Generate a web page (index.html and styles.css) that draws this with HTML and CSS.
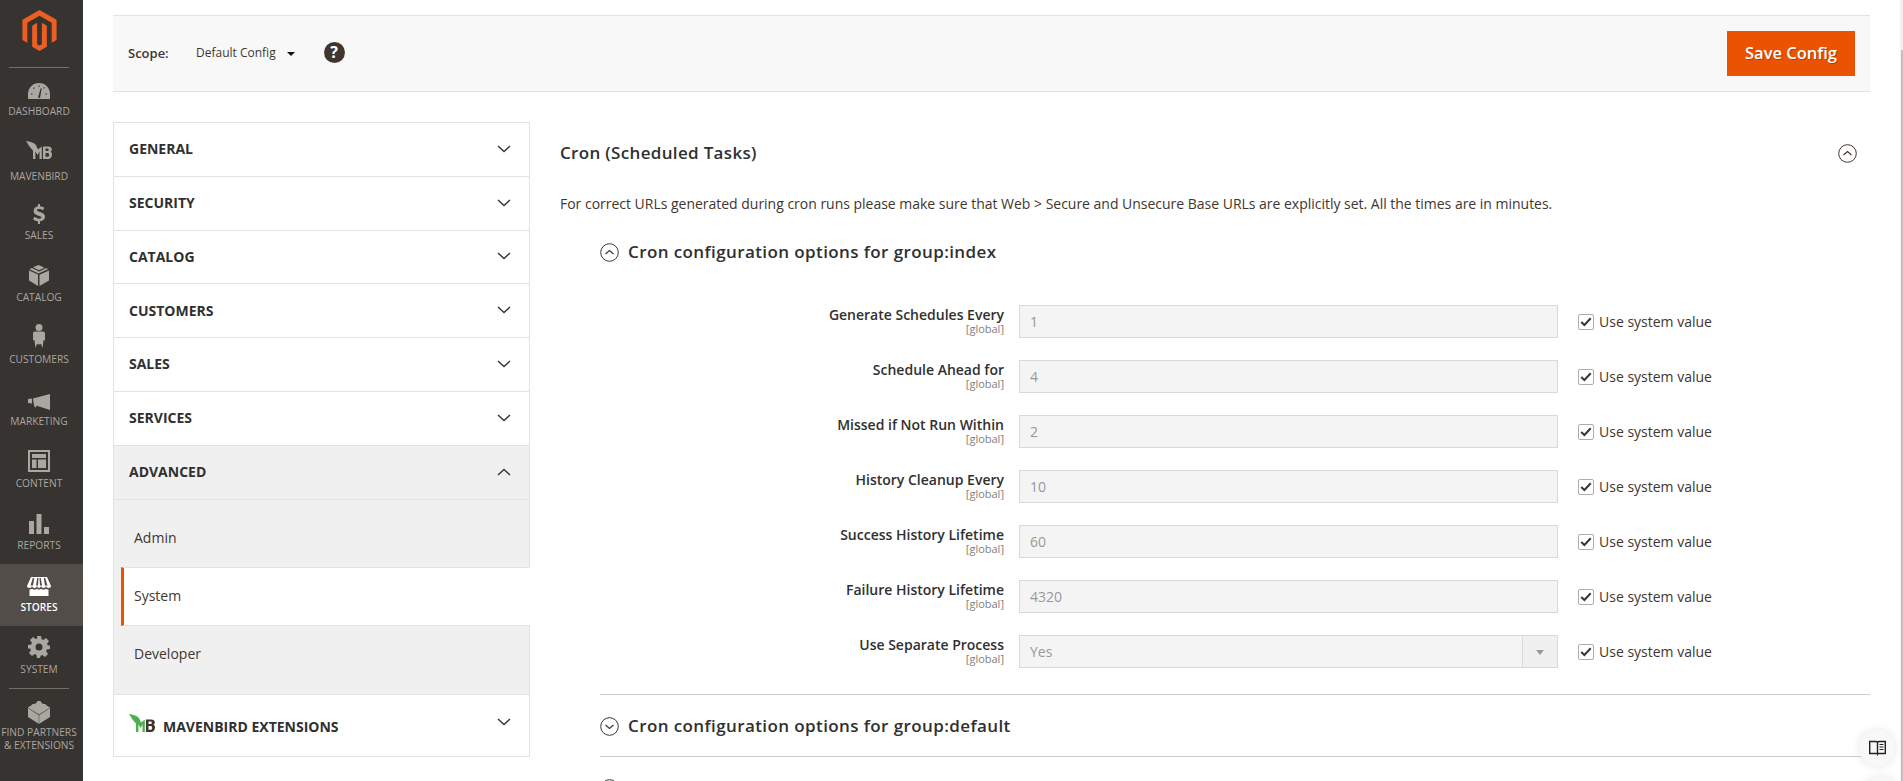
FILE: index.html
```html
<!DOCTYPE html>
<html lang="en">
<head>
<meta charset="utf-8">
<title>Configuration</title>
<link rel="stylesheet" href="styles.css">
</head>
<body>
<div class="app">
  <nav class="side">
    <div class="logo-box">
      <svg class="logo" viewBox="0 0 40 48" width="35" height="41"><path fill="#eb5f22" d="M20 0L40 11.5V35L34.3 38.3V15L20 6.8 5.7 15V38.3L0 35V11.5Z"/><path fill="#eb5f22" d="M11.4 18.3L17.2 15V40L20 41.7 22.8 40V15L28.6 18.3V43L20 48 11.4 43Z"/></svg>
    </div>
    <a class="nav-item nav-dash"><svg class="ic" width="22" height="16" viewBox="0 0 22 16"><path fill="#aaa6a0" d="M11 0C4.900 0 0 4.900 0 11v5h22v-5C22 4.900 17.100 0 11 0z"/><path fill="#373330" d="M10 14.500l2.700-9.300 1 .3-1.700 9.500zM3 10.500h1.500v1H3zM17.500 10.500H19v1h-1.500zM5 5.300l1.100-1 .8.800-1.100 1zM10.500 2.500h1v1.500h-1zM15.200 5l1-1 .8.800-1 1z"/></svg><span>Dashboard</span></a>
    <a class="nav-item nav-mb"><svg class="ic" width="26" height="19" viewBox="0 0 26 19"><path fill="#aaa6a0" d="M0 0C4 .3 7.500 1.500 10 4L12 8.500 15.800 5.500V18H13.500V10.500L11.600 14 9.400 10.500V18H7V9.500C4.500 7 2 3.500 0 0Z"/><path fill="#aaa6a0" fill-rule="evenodd" d="M17 5.500h5c2.500 0 3.800 1 3.800 3 0 1-.5 1.800-1.300 2.300 1 .5 1.500 1.300 1.500 2.500 0 2.900-1.700 4.700-4 4.700h-5zM19.500 7.500v2.500h2c.8 0 1.200-.4 1.200-1.200s-.4-1.300-1.200-1.300zM19.500 12v3.700h2.200c.9 0 1.400-.7 1.400-1.800 0-1.200-.5-1.900-1.400-1.900z"/></svg><span>Mavenbird</span></a>
    <a class="nav-item"><svg class="ic" width="12" height="20" viewBox="0 0 12 20"><path fill="#aaa6a0" d="M5 0h2v2.200c1.800.2 3.300.8 4.400 1.600L10 6.300C8.900 5.500 7.400 5 6 5 4.700 5 4 5.500 4 6.200c0 .8.900 1.100 3 1.800 3 .9 5 2 5 4.700 0 2.500-1.800 4.200-5 4.600V20H5v-2.600c-2-.2-3.700-1-5-2.100l1.600-2.500c1.300 1.100 3 1.900 4.500 1.900 1.500 0 2.300-.6 2.300-1.500S7.500 12.500 5.500 11.800C2.500 10.900.6 9.800.6 7.100.6 4.700 2.300 2.700 5 2.300z"/></svg><span>Sales</span></a>
    <a class="nav-item"><svg class="ic" width="20" height="21" viewBox="0 0 20 21"><path fill="#aaa6a0" d="M9.500 0L4 2.300l6 3 5.500-2.600zM16.800 3.300L11 6.200l-1 .4L3 3 .5 4.200l9 4.200 9.900-4.300zM0 5.500v10L9 21V9.500zM20 5.500L10.500 9.700V21L20 15.500z"/></svg><span>Catalog</span></a>
    <a class="nav-item"><svg class="ic" width="12" height="24" viewBox="0 0 12 24"><circle fill="#aaa6a0" cx="6" cy="3.500" r="3.500"/><path fill="#aaa6a0" d="M2 7.500h8c1.300 0 2 .8 2 2V16l-1.500.5L9.500 24 8 20l-2 .5L4 20l-1.500 4-1-7.500L0 16V9.500c0-1.200.7-2 2-2z"/></svg><span>Customers</span></a>
    <a class="nav-item"><svg class="ic" width="22" height="16" viewBox="0 0 22 16"><path fill="#aaa6a0" d="M22 0v16L8 11.500 8.500 13l-1.500.6-1.200-2.800L5 4.500zM0 5l4-.5v5L0 9z"/></svg><span>Marketing</span></a>
    <a class="nav-item"><svg class="ic" width="22" height="22" viewBox="0 0 22 22"><path fill="#aaa6a0" fill-rule="evenodd" d="M0 0h22v22H0zM2 2v18h18V2zM4 4h14v4H4zM4 9.500h4.500V18H4zM10 9.500h8V18h-8z"/></svg><span>Content</span></a>
    <a class="nav-item"><svg class="ic" width="20" height="20" viewBox="0 0 20 20"><path fill="#aaa6a0" d="M0 7h5v13H0zM7.500 0h5v20h-5zM15 13h5v7h-5z"/></svg><span>Reports</span></a>
    <a class="nav-item is-active"><svg class="ic" width="24" height="19" viewBox="0 0 24 19"><path fill="#fff" d="M4 0h16l4 9c0 1.300-1 2-2.500 2s-2.200-.8-2.500-2c-.3 1.200-1.200 2-2.500 2S14.300 10.200 14 9c-.3 1.200-1 2-2 2s-1.700-.8-2-2c-.3 1.200-1.200 2-2.500 2S5.300 10.200 5 9c-.3 1.200-1 2-2.500 2S0 10.300 0 9zM2.500 12.500c1 0 2-.2 2.500-.8.800.7 1.600.9 2.500.9s1.800-.3 2.500-.9c.7.600 1.400.9 2 .9s1.300-.3 2-.9c.7.600 1.600.9 2.500.9s1.700-.2 2.500-.9c.5.600 1.500.8 2.500.8V19h-19z"/><path fill="#524d49" d="M5.800 1h1.500L6 8.500H3.500zM10.200 1h1.300L11 8.500H9zM12.500 1h1.300L15 8.500h-2zM16.700 1h1.500L20.500 8.500H18z"/></svg><span>Stores</span></a>
    <a class="nav-item"><svg class="ic" width="22" height="22" viewBox="0 0 22 22"><path fill="#aaa6a0" fill-rule="evenodd" d="M9 0h4l.6 3.200 1.700.7L18 2l3 3-1.900 2.700.7 1.700L22 9.500v3.500l-3.200.6-.7 1.700L20 18l-3 3-2.700-1.900-1.700.7L12 22H9l-.6-3.200-1.700-.7L4 20l-3-3 1.900-2.700-.7-1.700L0 12.500V9l3.200-.6.7-1.700L2 4l3-3 2.700 1.900 1.700-.7zM11 7.500a3.500 3.500 0 100 7 3.500 3.500 0 000-7z"/></svg><span>System</span></a>
    <a class="nav-item nav-ext"><svg class="ic" width="22" height="31" viewBox="0 0 22 31"><path fill="#aaa6a0" d="M11 0c1.500 0 2.500.7 2.500 1.600v.5l2 .9c1.200-.3 2.500.3 2.700 1.200L22 6.500v9.500L11 23 0 16V6.500l3.500-2.300c.2-.9 1.500-1.500 2.700-1.200l2.300-1v-.4C8.500.7 9.500 0 11 0z" transform="translate(0 4)"/><path fill="#373330" d="M11 17.500L.5 11v.6L11 18.200 21.500 11.600V11zM10.800 18v9h.4v-9z"/></svg><span>Find Partners<br>&amp; Extensions</span></a>
  </nav>

  <main class="main">
    <header class="scope-bar">
      <b class="scope-label">Scope:</b>
      <span class="scope-value">Default Config</span>
      <i class="caret"></i>
      <span class="help">?</span>
      <button class="save" type="button">Save Config</button>
    </header>

    <div class="columns">
      <aside class="tabs">
        <div class="tab"><span>General</span><svg class="chev" width="14" height="8" viewBox="0 0 14 8"><path d="M1 1l6 5.500L13 1" fill="none" stroke="#41362f" stroke-width="1.500"/></svg></div>
        <div class="tab"><span>Security</span><svg class="chev" width="14" height="8" viewBox="0 0 14 8"><path d="M1 1l6 5.500L13 1" fill="none" stroke="#41362f" stroke-width="1.500"/></svg></div>
        <div class="tab"><span>Catalog</span><svg class="chev" width="14" height="8" viewBox="0 0 14 8"><path d="M1 1l6 5.500L13 1" fill="none" stroke="#41362f" stroke-width="1.500"/></svg></div>
        <div class="tab"><span>Customers</span><svg class="chev" width="14" height="8" viewBox="0 0 14 8"><path d="M1 1l6 5.500L13 1" fill="none" stroke="#41362f" stroke-width="1.500"/></svg></div>
        <div class="tab"><span>Sales</span><svg class="chev" width="14" height="8" viewBox="0 0 14 8"><path d="M1 1l6 5.500L13 1" fill="none" stroke="#41362f" stroke-width="1.500"/></svg></div>
        <div class="tab"><span>Services</span><svg class="chev" width="14" height="8" viewBox="0 0 14 8"><path d="M1 1l6 5.500L13 1" fill="none" stroke="#41362f" stroke-width="1.500"/></svg></div>
        <div class="tab tab-open"><span>Advanced</span><svg class="chev" width="14" height="8" viewBox="0 0 14 8"><path d="M1 7l6-5.500L13 7" fill="none" stroke="#41362f" stroke-width="1.500"/></svg></div>
        <div class="subs">
          <a class="sub sub-first">Admin</a>
          <a class="sub sub-current">System</a>
          <a class="sub sub-last">Developer</a>
        </div>
        <div class="tab tab-ext">
          <svg class="mb" width="26" height="19" viewBox="0 0 26 19"><path fill="#4caf50" d="M0 0C4 .3 7.500 1.500 10 4L12 8.500 15.800 5.500V18H13.500V10.500L11.600 14 9.400 10.500V18H7V9.500C4.500 7 2 3.500 0 0Z"/><path fill="#41362f" fill-rule="evenodd" d="M17 5.500h5c2.500 0 3.800 1 3.800 3 0 1-.5 1.800-1.300 2.300 1 .5 1.500 1.300 1.500 2.500 0 2.900-1.700 4.700-4 4.700h-5zM19.500 7.500v2.500h2c.8 0 1.200-.4 1.200-1.200s-.4-1.300-1.200-1.300zM19.500 12v3.700h2.200c.9 0 1.400-.7 1.400-1.800 0-1.200-.5-1.900-1.400-1.900z"/></svg>
          <span>Mavenbird Extensions</span>
          <svg class="chev chev-ext" width="14" height="8" viewBox="0 0 14 8"><path d="M1 1l6 5.500L13 1" fill="none" stroke="#41362f" stroke-width="1.500"/></svg>
        </div>
      </aside>

      <section class="content">
        <div class="sec-head">
          <h2>Cron (Scheduled Tasks)</h2>
          <svg class="circ" width="19" height="19" viewBox="0 0 19 19"><circle cx="9.500" cy="9.500" r="8.800" fill="none" stroke="#41362f"/><path d="M5.500 11l4-3.500 4 3.500" fill="none" stroke="#41362f" stroke-width="1.200"/></svg>
        </div>
        <p class="desc">For correct URLs generated during cron runs please make sure that Web &gt; Secure and Unsecure Base URLs are explicitly set. All the times are in minutes.</p>

        <div class="group group-first">
          <div class="group-head group-open">
            <svg class="circ" width="19" height="19" viewBox="0 0 19 19"><circle cx="9.500" cy="9.500" r="8.800" fill="none" stroke="#41362f"/><path d="M5.500 11l4-3.500 4 3.500" fill="none" stroke="#41362f" stroke-width="1.200"/></svg>
            <h3>Cron configuration options for group:index</h3>
          </div>
          <div class="rows">
            <div class="row"><label><b>Generate Schedules Every</b><small>[global]</small></label><input class="field" value="1" disabled><span class="sys"><i class="check"><svg width="12" height="10" viewBox="0 0 12 10"><path d="M1.200 5l3.200 3 6.300-6.800" fill="none" stroke="#41362f" stroke-width="2"/></svg></i>Use system value</span></div>
            <div class="row"><label><b>Schedule Ahead for</b><small>[global]</small></label><input class="field" value="4" disabled><span class="sys"><i class="check"><svg width="12" height="10" viewBox="0 0 12 10"><path d="M1.200 5l3.200 3 6.300-6.800" fill="none" stroke="#41362f" stroke-width="2"/></svg></i>Use system value</span></div>
            <div class="row"><label><b>Missed if Not Run Within</b><small>[global]</small></label><input class="field" value="2" disabled><span class="sys"><i class="check"><svg width="12" height="10" viewBox="0 0 12 10"><path d="M1.200 5l3.200 3 6.300-6.800" fill="none" stroke="#41362f" stroke-width="2"/></svg></i>Use system value</span></div>
            <div class="row"><label><b>History Cleanup Every</b><small>[global]</small></label><input class="field" value="10" disabled><span class="sys"><i class="check"><svg width="12" height="10" viewBox="0 0 12 10"><path d="M1.200 5l3.200 3 6.300-6.800" fill="none" stroke="#41362f" stroke-width="2"/></svg></i>Use system value</span></div>
            <div class="row"><label><b>Success History Lifetime</b><small>[global]</small></label><input class="field" value="60" disabled><span class="sys"><i class="check"><svg width="12" height="10" viewBox="0 0 12 10"><path d="M1.200 5l3.200 3 6.300-6.800" fill="none" stroke="#41362f" stroke-width="2"/></svg></i>Use system value</span></div>
            <div class="row"><label><b>Failure History Lifetime</b><small>[global]</small></label><input class="field" value="4320" disabled><span class="sys"><i class="check"><svg width="12" height="10" viewBox="0 0 12 10"><path d="M1.200 5l3.200 3 6.300-6.800" fill="none" stroke="#41362f" stroke-width="2"/></svg></i>Use system value</span></div>
            <div class="row"><label><b>Use Separate Process</b><small>[global]</small></label><div class="field select"><span>Yes</span><i class="select-btn"></i></div><span class="sys"><i class="check"><svg width="12" height="10" viewBox="0 0 12 10"><path d="M1.200 5l3.200 3 6.300-6.800" fill="none" stroke="#41362f" stroke-width="2"/></svg></i>Use system value</span></div>
          </div>
        </div>

        <div class="group-closed">
          <div class="group-head">
            <svg class="circ" width="19" height="19" viewBox="0 0 19 19"><circle cx="9.500" cy="9.500" r="8.800" fill="none" stroke="#41362f"/><path d="M5.500 8l4 3.500 4-3.500" fill="none" stroke="#41362f" stroke-width="1.200"/></svg>
            <h3>Cron configuration options for group:default</h3>
          </div>
        </div>
        <div class="group-closed">
          <div class="group-head">
            <svg class="circ" width="19" height="19" viewBox="0 0 19 19"><circle cx="9.500" cy="9.500" r="8.800" fill="none" stroke="#41362f"/><path d="M5.500 8l4 3.500 4-3.500" fill="none" stroke="#41362f" stroke-width="1.200"/></svg>
          </div>
        </div>
      </section>
    </div>
  </main>
</div>

<div class="scrollbar"><i class="thumb"></i></div>
<div class="fab"><svg width="17" height="16" viewBox="0 0 17 16"><path fill="none" stroke="#222" stroke-width="1.400" d="M.7 1.500h6c1 0 1.800.7 1.800 1.600V13.500H.7zM16.300 1.500h-6c-1 0-1.800.7-1.800 1.600V13.500h7.800z"/><path stroke="#222" stroke-width="1.100" d="M10.500 4.500h4M10.500 7h4M10.500 9.500h4M8.500 13.500V15.500"/></svg></div>
<div class="fab fab-next"></div>
</body>
</html>
```
FILE: styles.css
```css
* { box-sizing: border-box; }
html, body { margin: 0; height: 100%; overflow: hidden; background: #fff; }
body { font-family: "Open Sans", "Liberation Sans", sans-serif; color: #41362f; font-size: 14px; }
.app { display: flex; height: 781px; overflow: hidden; }

.side { width: 83px; flex: none; background: #373330; color: #aaa6a0; }
.logo-box { height: 68px; padding: 10px 0 0 22px; position: relative; }
.logo { display: block; }
.logo-box::after, .nav-ext::before { content: ""; display: block; height: 1px; width: 60px; background: #736d68; }
.logo-box::after { position: absolute; left: 9px; bottom: 0; }
.nav-item { position: relative; display: flex; flex-direction: column; align-items: center; justify-content: flex-end; height: 62px; padding: 0 5px 12px 0; font-size: 10.2px; line-height: 14px; text-transform: uppercase; text-align: center; white-space: nowrap; }
.ic { display: block; margin-bottom: 4px; }
.nav-mb { padding-bottom: 9px; }
.nav-mb .ic { margin-bottom: 9px; }
.nav-dash .ic { margin-bottom: 5px; }
.is-active { background: #524d49; color: #fff; font-weight: 600; }
.nav-ext { height: 80px; justify-content: flex-start; padding-bottom: 0; line-height: 13.5px; }
.nav-ext::before { flex: none; margin-bottom: 8px; }
.nav-ext .ic { margin-bottom: 0; }
.nav-ext span { margin-top: -2.5px; }

.main { flex: none; width: 1757px; margin-left: 30px; padding-top: 15px; }
.scope-bar { display: flex; align-items: center; height: 77px; padding: 0 15px 2px; background: #f8f8f8; border-top: 1px solid #e3e3e3; border-bottom: 1px solid #e3e3e3; font-size: 12px; }
.scope-label { font-weight: 600; font-size: 13px; width: 68px; }
.scope-value { color: #41362f; font-size: 12px; }
.caret { width: 0; height: 0; margin: 2px 0 0 11px; border: 4px solid transparent; border-top: 4px solid #111; border-bottom: 0; }
.help { width: 21px; height: 21px; margin-left: 29px; border-radius: 50%; background: #41362f; color: #fff; font-size: 16px; font-weight: 700; line-height: 21px; text-align: center; }
.save { margin: 2px 0 0 auto; width: 128px; height: 45px; padding: 0 0 2px; border: 0; background: #eb5202; color: #fff; font: 600 16.5px "Open Sans", sans-serif; text-shadow: 1px 1px 0 rgba(0,0,0,.25); }

.columns { display: grid; grid-template-columns: 417px 1fr; column-gap: 30px; margin-top: 30px; }
.tabs { align-self: start; border: 1px solid #e3e3e3; }
.tab { display: flex; align-items: center; justify-content: space-between; height: 53.75px; padding: 0 18px 1px 15px; border-bottom: 1px solid #e3e3e3; font-size: 14px; font-weight: 700; color: #303030; text-transform: uppercase; }
.tab-open { background: #f0f0f0; height: 54.5px; }
.subs { background: #f0f0f0; border-bottom: 1px solid #e3e3e3; }
.sub { display: block; padding-left: 20px; color: #41362f; font-size: 14px; line-height: 20px; }
.sub-first { height: 67px; padding-top: 28px; }
.sub-current { position: relative; height: 59px; margin-left: 7px; padding: 18px 0 0 10px; background: #fff; border-left: 3px solid #eb5202; border-top: 1px solid #e3e3e3; border-bottom: 1px solid #e3e3e3; margin-right: -1px; }
.sub-last { height: 68px; padding-top: 18px; }
.tab-ext { height: 61px; padding-right: 18px; justify-content: flex-start; border-bottom: 0; }
.tab-ext .mb { margin-top: -4px; }
.tab-ext span { margin-left: 8px; padding-top: 2px; }
.chev-ext { margin: -6px 0 0 auto; }

.sec-head { display: flex; align-items: center; justify-content: space-between; height: 62px; padding-right: 13px; }
h2 { margin: -2px 0 0; font-size: 17px; font-weight: 600; color: #303030; letter-spacing: .33px; }
.desc { margin: 10px 0 0; line-height: 20px; font-size: 14px; letter-spacing: -.016px; }
.group-first { margin-left: 40px; border-bottom: 1px solid #ccc; }
.group-closed { margin-left: 40px; border-bottom: 1px solid #ccc; }
.group-head { display: flex; align-items: center; height: 61px; padding-top: 2px; gap: 9px; }
.group-open { height: 76px; padding-top: 0; }
h3 { margin: -2px 0 0; font-size: 17px; font-weight: 600; color: #303030; letter-spacing: .4px; }
.rows { display: flex; flex-direction: column; gap: 22px; padding: 15px 0 26px; }
.row { display: grid; grid-template-columns: 404px 539px auto; column-gap: 15px; height: 33px; }
.row label { display: flex; flex-direction: column; align-items: flex-end; }
.row label b { font-size: 14px; font-weight: 600; line-height: 20px; color: #303030; }
.row label small { font-size: 11px; line-height: 12px; color: #808080; margin-top: -2px; }
.field { width: 539px; height: 33px; padding: 0 10px; border: 1px solid #d9d9d9; background: #f4f4f4; font: 14px "Open Sans", sans-serif; color: #999; opacity: 1; -webkit-text-fill-color: #999; border-radius: 0; outline: 0; }
.select { display: flex; align-items: center; justify-content: space-between; padding-right: 0; }
.select-btn { width: 35px; height: 31px; background: #f0f0f0; border-left: 1px solid #d9d9d9; position: relative; }
.select-btn::after { content: ""; position: absolute; left: 13px; top: 14px; border: 4px solid transparent; border-top: 5px solid #999; border-bottom: 0; }
.sys { display: flex; align-items: center; margin-left: 5px; font-size: 14px; color: #41362f; }
.check { display: flex; align-items: center; justify-content: center; width: 16px; height: 16px; margin-right: 5px; border: 1px solid #adadad; border-radius: 2px; background: #fff; }

.scrollbar { position: absolute; right: 0; top: 0; width: 3px; height: 781px; background: #f1f1f1; }
.thumb { position: absolute; left: 1px; top: 50px; width: 2px; height: 731px; background: #c1c1c1; display: block; }
.fab { position: absolute; left: 1859px; top: 730px; display: flex; align-items: center; justify-content: center; width: 36px; height: 36px; border-radius: 50%; background: #f8f8f8; box-shadow: 0 0 10px rgba(0,0,0,.1); }
.fab-next { top: 777px; left: 1863px; }
```
